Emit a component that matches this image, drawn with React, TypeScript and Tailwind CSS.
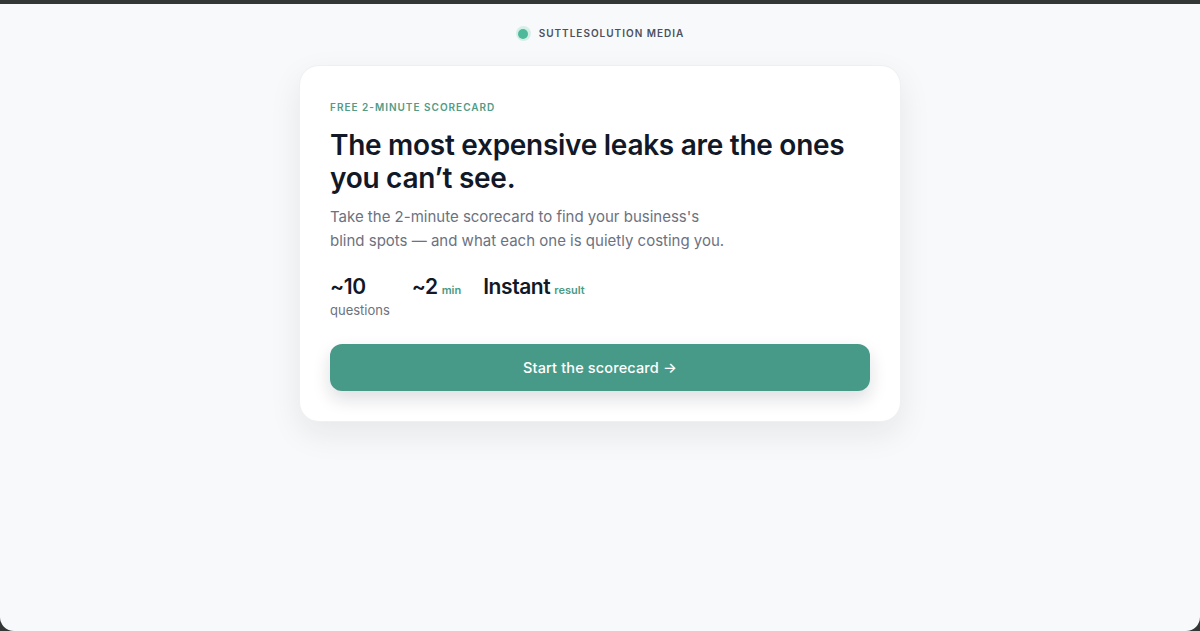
export default function App() {
  const stats = [
    { value: "~10", unit: "", below: "questions" },
    { value: "~2", unit: "min", below: "" },
    { value: "Instant", unit: "result", below: "" },
  ]

  return (
    <div className="h-[631px] w-full bg-[#333836] pt-[4px] font-['Inter',sans-serif]">
      <div className="flex h-[627px] flex-col items-center rounded-b-[14px] bg-[#f8f9fa]">
        {/* brand */}
        <div className="mt-[22px] flex items-center gap-[8px]">
          <span className="flex h-[15px] w-[15px] items-center justify-center rounded-full bg-[#d5efe7]">
            <span className="h-[10px] w-[10px] rounded-full bg-[#4fb99b]" />
          </span>
          <span className="text-[10px] font-semibold tracking-[0.1em] text-[#4b5160]">SUTTLESOLUTION MEDIA</span>
        </div>

        {/* card */}
        <div className="mt-[24px] w-[602px] rounded-[20px] border border-[#eef0f2] bg-white px-[30px] pb-[30px] pt-[34px] shadow-[0_12px_32px_rgba(15,23,42,0.08)]">
          <p className="text-[10px] font-semibold leading-[15px] tracking-[0.1em] text-[#4f9c87]">
            FREE 2-MINUTE SCORECARD
          </p>
          <h1 className="mt-[14px] text-[28px] font-semibold leading-[33px] tracking-[-0.01em] text-[#111827]">
            The most expensive leaks are the ones
            <br />
            you can’t see.
          </h1>
          <p className="mt-[10px] text-[15px] leading-[24px] text-[#6b7280]">
            Take the 2-minute scorecard to find your business's
            <br />
            blind spots — and what each one is quietly costing you.
          </p>

          <div className="mt-[20px] flex gap-[22px]">
            {stats.map((s) => (
              <div key={s.value} className="flex flex-col">
                <div className="flex items-baseline gap-[4px]">
                  <span className="text-[21px] font-semibold leading-[28px] tracking-[-0.02em] text-[#111827]">{s.value}</span>
                  {s.unit && <span className="text-[11px] font-semibold text-[#4a9a84]">{s.unit}</span>}
                </div>
                {s.below && <span className="text-[13px] leading-[18px] text-[#6b7280]">{s.below}</span>}
              </div>
            ))}
          </div>

          <button className="mt-[25px] flex h-[47px] w-full items-center justify-center rounded-[12px] bg-[#489a88] text-[14.5px] font-medium tracking-[0.01em] text-white shadow-[0_8px_18px_rgba(15,23,42,0.14)]">
            Start the scorecard →
          </button>
        </div>
      </div>
    </div>
  )
}
